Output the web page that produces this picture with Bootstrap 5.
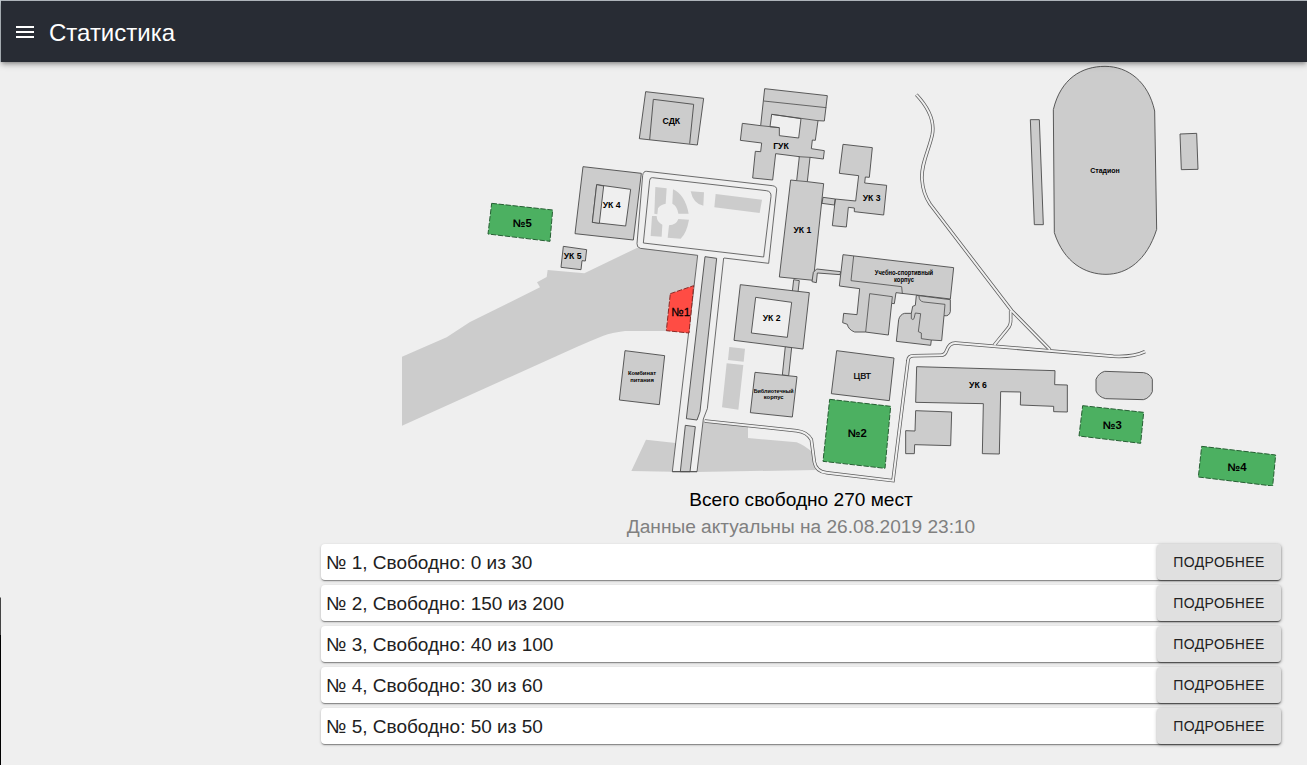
<!DOCTYPE html>
<html lang="ru">
<head>
<meta charset="utf-8">
<meta name="viewport" content="width=device-width, initial-scale=1">
<title>Статистика</title>
<link href="https://cdn.jsdelivr.net/npm/bootstrap@5.3.0/dist/css/bootstrap.min.css" rel="stylesheet">
<style>
body{font-family:"Liberation Sans",Arial,sans-serif;color:#212121;overflow:hidden;height:765px;
 background:linear-gradient(#c4ccd2 0 62px,#efefef 62px 597px,#444 598px 635px,#000 635px) 0 0/1px 100% no-repeat,#efefef}
.topbar{height:62px;margin-left:1px;padding:1px 0 0 15px;background:#282c34;border-top:1px solid #aeb4ba;box-shadow:0 2px 4px -1px rgba(0,0,0,.3),0 3px 6px rgba(0,0,0,.22);z-index:2}
.topbar h1{font-size:24px;line-height:30px;margin:0 0 0 15px;padding-top:2px}
.content-col{width:960px;margin-left:321px}
.campus{display:block;width:960px;height:424px}
.total,.actual{font-size:19.13px;line-height:27px}
.total{color:#000}.actual{color:#808080}
.lot-list{gap:5px;margin-top:4px}
.lot{height:36px;padding-left:5px;background:#fff;border-radius:4px;font-size:19px;box-shadow:0 1px 3px rgba(0,0,0,.2),0 1px 1px rgba(0,0,0,.14),0 2px 1px -1px rgba(0,0,0,.25)}
.lot span{padding-top:2px}
.btn-more{width:124px;height:36px;padding:0;border:0;border-radius:4px;background:#e0e0e0;color:#212121;font-size:14px;letter-spacing:.4px;box-shadow:0 1px 4px rgba(0,0,0,.2),0 1px 2px rgba(0,0,0,.2),0 2px 1px -1px rgba(0,0,0,.25)}
.bld{fill:#ccc;stroke:#4f4f4f;stroke-width:2.8}
.ground{fill:#ccc}
.court{fill:#efefef;stroke:#4f4f4f;stroke-width:2.8}
.edge{fill:none;stroke:#4f4f4f;stroke-width:2.5}
.road-out{fill:none;stroke:#5c5c5c;stroke-width:10.5}
.road-in{fill:none;stroke:#efefef;stroke-width:6}
.free{fill:#4cb061;stroke:#265f33;stroke-width:3;stroke-dasharray:16 5}
.full{fill:#ff4c44;stroke:#8c2824;stroke-width:3;stroke-dasharray:16 5}
.campus text{font-family:"Liberation Sans",Arial,sans-serif;text-anchor:middle;fill:#000;font-size:26px;font-weight:700}
.campus .lotname{font-size:34px}
.campus .plain{font-weight:400;font-size:35px;stroke:#000;stroke-width:.8}
.campus .light{font-weight:400;font-size:27px;stroke:#000;stroke-width:.7}
.campus .stad{font-size:21px}
.campus .tiny{font-size:17.5px}
.campus .tall{font-size:19.5px}
</style>
</head>
<body>
<header class="topbar d-flex align-items-center text-white position-relative">
 <svg width="18" height="12" viewBox="0 0 18 12" fill="#fff" aria-hidden="true"><path d="M0 0h18v2H0zM0 5h18v2H0zM0 10h18v2H0z"/></svg>
 <h1 class="fw-normal">Статистика</h1>
</header>
<main class="content-col">
<svg class="campus" viewBox="963 185 2880 1272" role="img" aria-label="Карта кампуса">
 <defs>
  <g id="roads">
   <path d="M2749 283C2780 316 2805 357 2797 402C2787 450 2762 492 2766 538Q2769 580 2790 611L3035 931L3150 1048"/>
   <path d="M3032 932V958Q3033 974 3023 985L2983 1034"/>
   <path d="M2114 1262L2390 1291Q2422 1295 2434 1318L2443 1385Q2448 1414 2480 1417L2679 1441L2724 1080Q2725 1066 2741 1066L2822 1065Q2835 1065 2840 1050Q2848 1028 2866 1028L3340 1068Q3400 1071 3435 1054"/>
  </g>
 </defs>
 <!-- open ground -->
 <g class="ground">
  <path transform="translate(1170 720)" d="M36 349L170 291L240 245L450 141L441 126L470 110L473 89L583 99L742 22L922 45L898 277L830 272H705Q665 277 640 286Q600 302 560 320L36 556Z"/>
  <path transform="translate(1860 720)" d="M78 598L167 608L157 694L34 692ZM250 542L384 557V593L530 606Q553 614 582 640L589 689L230 695Z"/>
  <g transform="translate(1890 240)">
   <path d="M76 320L110 324L107 370Q90 373 84 384L82 402L73 400ZM129 327Q165 343 176 400H145Q142 377 127 370ZM182 333L222 336L220 376Q190 371 182 333ZM257 341L396 358L389 398L253 381ZM66 407H80Q80 425 97 433L95 469L62 467ZM145 416L177 418Q170 458 152 475L113 472L117 435Q139 434 145 416Z"/>
  </g>
  <path transform="translate(1860 720)" d="M328 320L375 325L371 364L324 359ZM320 369L370 374L355 508L306 501Z"/>
 </g>
 <use href="#roads" class="road-out"/>
 <use href="#roads" class="road-in"/>
 <!-- square and alley -->
 <g class="edge">
  <g transform="translate(1890 240)">
   <path d="M203 525L31 504Q20 501 21 490L38 285Q40 272 50 273L427 316Q441 318 440 329L416 549L282 533"/>
   <path d="M67 292L409 331Q424 333 423 348L401 530L40 488L59 300Q60 291 67 292Z"/>
  </g>
  <g transform="translate(1860 720)">
   <path d="M233 45L157 694H231L250 536L262 505L311 53"/>
  </g>
 </g>
 <path class="bld" transform="translate(1860 720)" d="M255 49L290 54L240 514L231 539L199 535ZM196 555L226 559L210 694H181ZM157 694H231"/>

 <!-- upper left -->
 <g transform="translate(1440 240)">
  <path class="bld" d="M497 34L671 54L652 194L478 175ZM509 178L520 57L641 72L629 190"/>
  <path class="bld" d="M309 259L484 279L460 479L285 460Z"/>
  <path class="court" d="M350 313L452 327L437 437L337 426Z"/>
  <path class="bld" d="M350 313L371 317L358 429L337 426Z"/>
  <path class="bld" d="M250 498L320 508L316 542L306 541L303 568L243 561Z"/>
  <path class="free" d="M35 369L218 389L210 483L24 461Z"/>
 </g>
 <!-- main block -->
 <g transform="translate(1890 240)">
  <path class="bld" d="M404 25L592 46L583 122L564 121L556 180L547 179L544 205L583 211L580 236L540 231L532 304L581 310L550 600L448 590L482 299L500 301L508 229L437 220L428 299L368 293L376 213L392 214L395 188L331 180L337 129L392 136Z"/>
  <path class="court" d="M425 102L513 115L506 173L448 166V142L420 139Z"/>
  <path class="edge" d="M401 62L589 82M425 102L564 121M392 136L448 142M500 301L532 304M505 229L540 231"/>
  <path class="bld" d="M639 192L727 202L718 291L706 290L704 308L770 315L761 404L673 394V383L655 381L649 440L607 436L616 356L677 362L686 286L628 279ZM579 351L616 356L613 374L576 369Z"/>
 </g>
 <!-- sports building and centre -->
 <g transform="translate(2400 720)">
  <path class="bld" d="M50 86L122 94L120 103L52 98L49 127L36 124L40 96Z"/>
  <path class="bld" d="M129 43L461 82L451 176L288 157L283 190L275 189L265 284L196 275H164Q145 268 142 252L128 247L131 219L171 223L179 145L118 137Z"/>
  <path class="edge" d="M161 47L153 121L305 139L307 160M277 169L209 160L197 275M277 169L275 189"/>
  <path class="bld" d="M349 165L451 178V214Q447 229 432 226L425 301L394 299L392 315L289 303L296 238Q300 222 314 219H334L338 198L346 195Z"/>
  <path class="edge" d="M357 167Q357 183 371 185L435 192L432 226M334 219V235Q339 240 342 235L346 218L362 220L355 274L364 278V295L394 299"/>
  <path class="bld" d="M110 331L282 353L268 481L94 460Z"/>
  <path class="free" d="M89 477L272 498L255 684L69 663Z"/>
  <path class="bld" d="M350 379L765 391L764 433L802 434V515L761 514V498L661 494L662 455L602 454L598 641L547 640L550 490L347 486ZM347 511L455 515L452 616L344 613L343 640H317V571L345 572Z"/>
 </g>
 <g transform="translate(1860 720)">
  <path class="bld" d="M521 118L538 121L534 156L517 154ZM496 318L515 321L506 406L487 404Z"/>
  <path class="bld" d="M361 133L568 157L549 326L342 300Z"/>
  <path class="court" d="M407 171L515 186L502 291L394 278Z"/>
  <path class="bld" d="M405 396L531 409L517 530L391 517ZM15 331L134 346L118 493L-2 479Z"/>
  <path class="full" d="M151 160L221 136L207 278L139 271Z"/>
 </g>
 <!-- stadium and east lots -->
 <g transform="translate(3060 180)">
  <path class="bld" d="M100 148C122 55 185 18 255 18S385 65 404 152L410 507C380 602 320 642 258 642S132 607 103 517ZM31 178H58L70 493H43ZM480 221L530 219L534 327L484 328Z"/>
 </g>
 <g transform="translate(2940 840)">
  <path class="bld" d="M374 273L491 277Q510 280 517 297V334Q508 354 490 358L377 355Q355 350 348 332V297Q356 278 374 273Z"/>
  <path class="free" d="M308 376L491 396L482 489L297 467Z"/>
  <path class="free" d="M665 498L887 524L878 617L655 590Z"/>
 </g>
 <!-- labels -->
 <text x="2014" y="371">СДК</text>
 <text x="2343" y="445">ГУК</text>
 <text x="1835" y="622">УК 4</text>
 <text x="1718" y="775">УК 5</text>
 <text x="2615" y="601">УК 3</text>
 <text x="2407" y="697">УК 1</text>
 <text x="2315" y="961">УК 2</text>
 <text class="light" x="2587" y="1136">ЦВТ</text>
 <text x="2934" y="1162">УК 6</text>
 <text class="stad" x="3315" y="517">Стадион</text>
 <text class="tiny" x="1926" y="1124">Комбинат</text><text class="tiny" x="1926" y="1145">питания</text>
 <text class="tiny" x="2321" y="1178" textLength="120" lengthAdjust="spacingAndGlyphs">Библиотечный</text><text class="tiny" x="2321" y="1196">корпус</text>
 <text class="tiny tall" x="2712" y="823" textLength="175" lengthAdjust="spacingAndGlyphs">Учебно-спортивный</text><text class="tiny tall" x="2712" y="845" textLength="60" lengthAdjust="spacingAndGlyphs">корпус</text>
 <text class="plain" x="2042" y="946">№1</text>
 <text class="lotname" x="2572" y="1310">№2</text>
 <text class="lotname" x="3337" y="1286">№3</text>
 <text class="lotname" x="3711" y="1412">№4</text>
 <text class="lotname" x="1567" y="680">№5</text>
</svg>
<div class="total text-center">Всего свободно 270 мест</div>
<div class="actual text-center">Данные актуальны на 26.08.2019 23:10</div>
<div class="lot-list d-flex flex-column">
 <div class="lot d-flex align-items-center justify-content-between"><span>№ 1, Свободно: 0 из 30</span><button class="btn btn-more text-uppercase">Подробнее</button></div>
 <div class="lot d-flex align-items-center justify-content-between"><span>№ 2, Свободно: 150 из 200</span><button class="btn btn-more text-uppercase">Подробнее</button></div>
 <div class="lot d-flex align-items-center justify-content-between"><span>№ 3, Свободно: 40 из 100</span><button class="btn btn-more text-uppercase">Подробнее</button></div>
 <div class="lot d-flex align-items-center justify-content-between"><span>№ 4, Свободно: 30 из 60</span><button class="btn btn-more text-uppercase">Подробнее</button></div>
 <div class="lot d-flex align-items-center justify-content-between"><span>№ 5, Свободно: 50 из 50</span><button class="btn btn-more text-uppercase">Подробнее</button></div>
</div>
</main>
<script src="https://cdn.jsdelivr.net/npm/bootstrap@5.3.0/dist/js/bootstrap.bundle.min.js"></script>
</body>
</html>
